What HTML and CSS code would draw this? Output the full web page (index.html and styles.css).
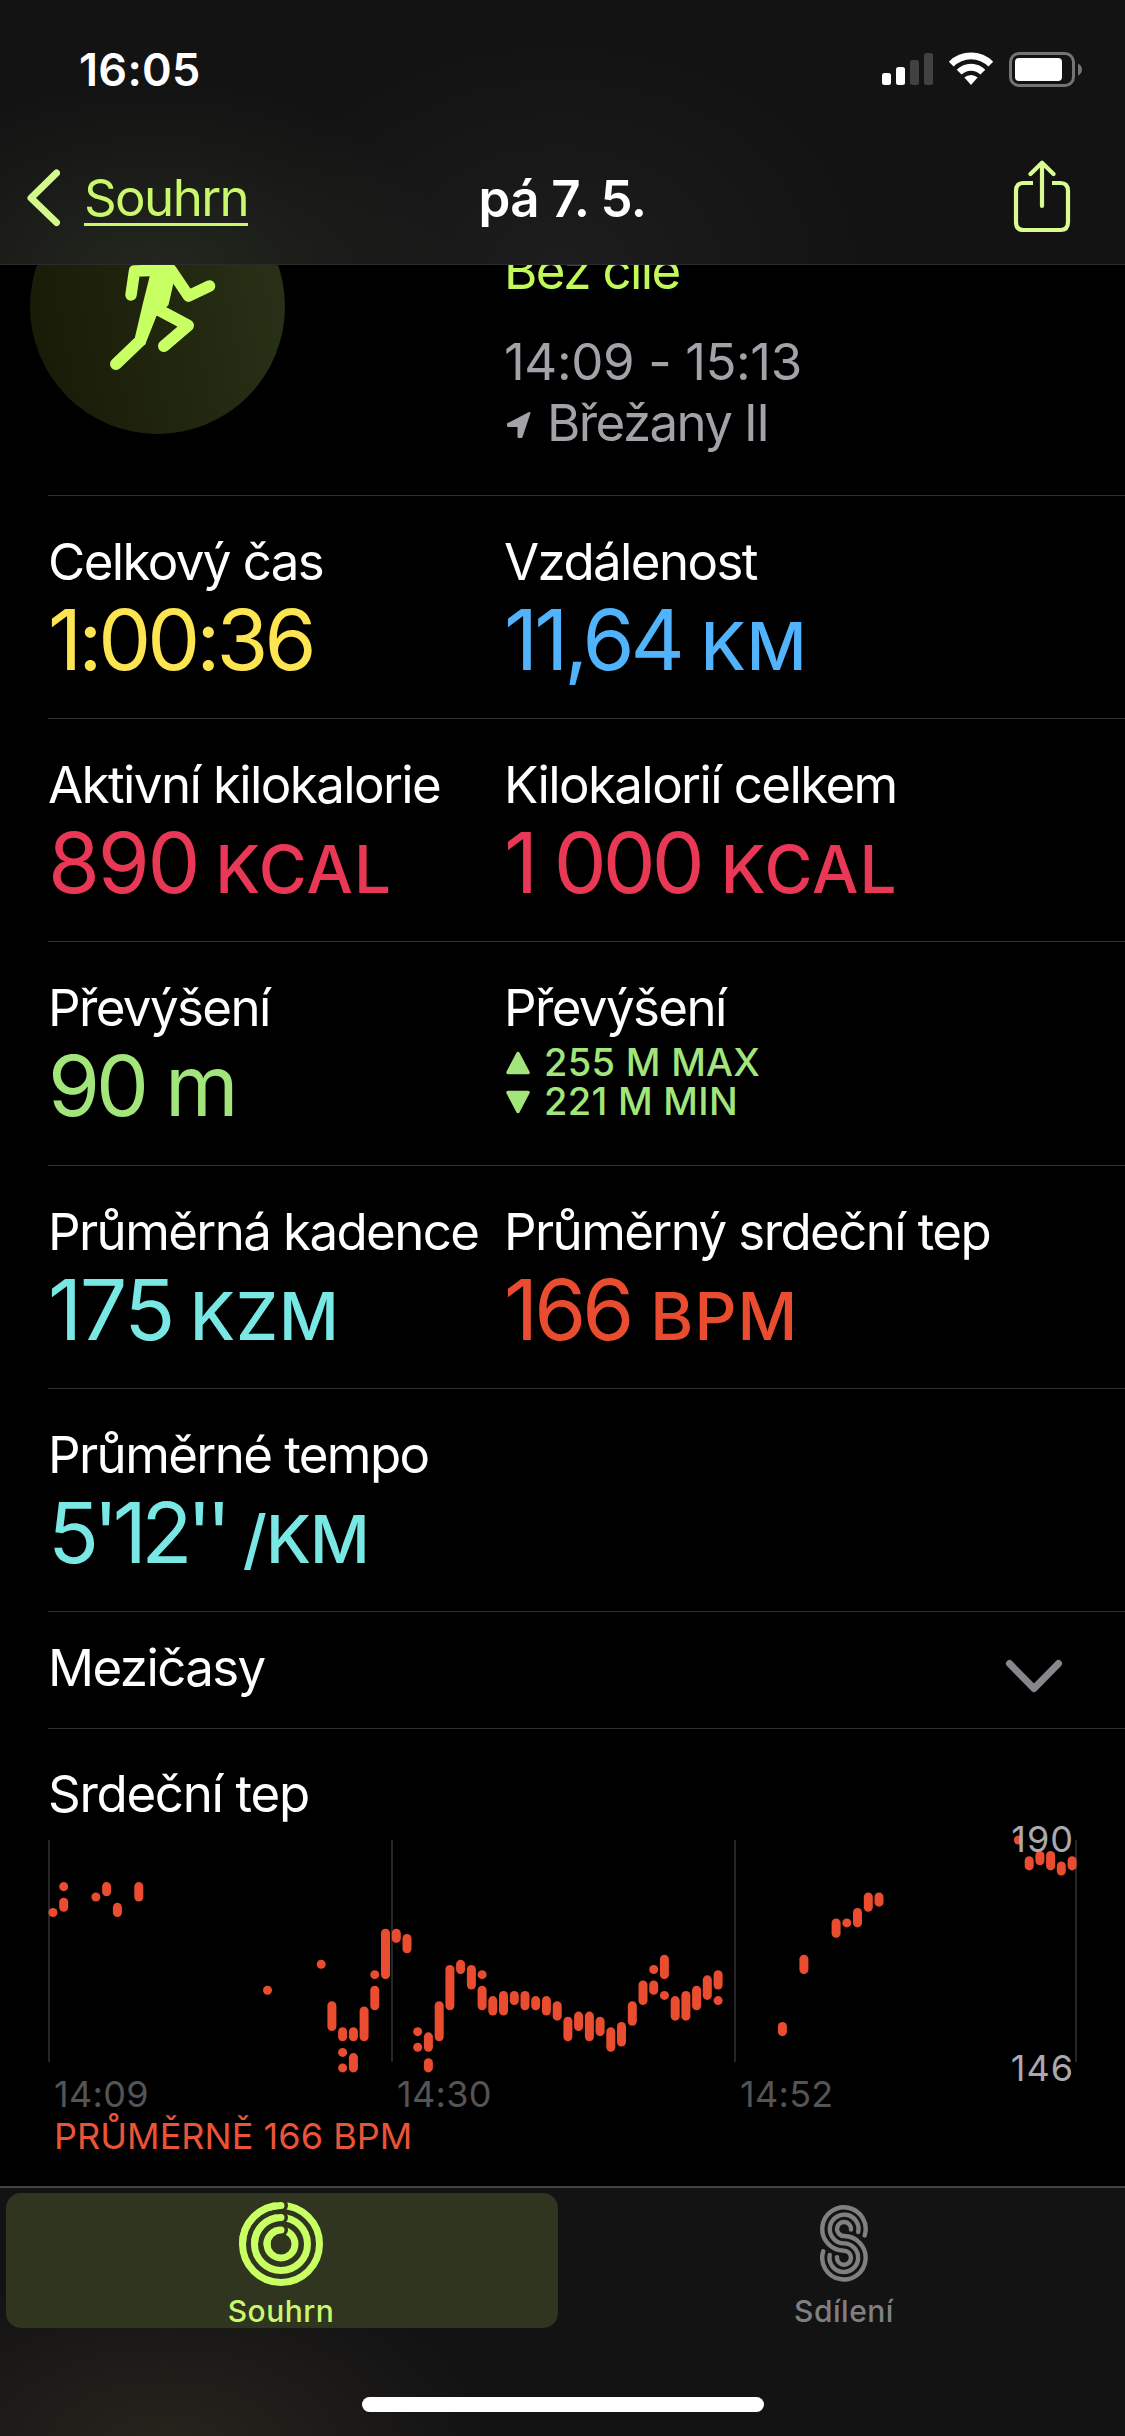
FILE: index.html
```html
<!DOCTYPE html>
<html lang="cs">
<head>
    <meta charset="UTF-8">
    <meta name="viewport" content="width=device-width, initial-scale=1.0">
    <title>pá 7. 5.</title>
    <link rel="stylesheet" href="styles.css">
</head>
<body>
    <header class="top">
        <div class="status-bar">
            <span class="time">16:05</span>
            <div class="status-icons">
                <svg width="51" height="36" viewBox="0 0 51 36">
                    <rect x="0" y="21" width="9" height="12" rx="2.5" fill="#fff"/>
                    <rect x="14" y="15" width="9" height="18" rx="2.5" fill="#fff"/>
                    <rect x="28" y="8" width="9" height="25" rx="2.5" fill="#414141"/>
                    <rect x="42" y="1" width="9" height="32" rx="2.5" fill="#414141"/>
                </svg>
                <svg width="46" height="36" viewBox="0 0 46 36">
                    <path d="M0.8 9.8 A31 31 0 0 1 45.2 9.8 L40.4 14.6 A24.5 24.5 0 0 0 5.6 14.6 Z" fill="#fff"/>
                    <path d="M8.7 17.8 A20 20 0 0 1 37.3 17.8 L32.4 22.6 A13.3 13.3 0 0 0 13.6 22.6 Z" fill="#fff"/>
                    <path d="M16.4 25.6 A9.4 9.4 0 0 1 29.6 25.6 L23 33 Z" fill="#fff"/>
                </svg>
                <svg width="73" height="36" viewBox="0 0 73 36">
                    <rect x="1.5" y="1.5" width="63" height="32" rx="8.5" fill="none" stroke="#747474" stroke-width="3"/>
                    <rect x="6" y="6" width="47" height="23" rx="4" fill="#fff"/>
                    <path d="M69 11.5 Q73 13.5 73 17.5 Q73 21.5 69 23.5 Z" fill="#747474"/>
                </svg>
            </div>
        </div>
        <nav class="nav-bar">
            <a class="back">
                <svg width="34" height="58" viewBox="0 0 34 58">
                    <path d="M30.5 4 L5 29 L30.5 53.5" fill="none" stroke="#d3f98c" stroke-width="7" stroke-linecap="round" stroke-linejoin="round"/>
                </svg>
                <span>Souhrn</span>
            </a>
            <h1>pá 7. 5.</h1>
            <svg class="share" width="58" height="74" viewBox="0 0 58 74">
                <g fill="none" stroke="#d9fb92" stroke-width="4.2">
                    <path d="M20 23 H10.5 Q3 23 3 31 V62 Q3 70 10.5 70 H47.5 Q55 70 55 62 V31 Q55 23 47.5 23 H39"/>
                    <path d="M29 46 V3 M17.5 14 L29 2.8 L40.5 14" stroke-linecap="round" stroke-linejoin="round"/>
                </g>
            </svg>
        </nav>
    </header>

    <main>
        <section class="hero">
            <svg class="badge" width="256" height="256" viewBox="0 0 256 256">
                <defs>
                    <linearGradient id="badgeFill" x1="0" y1="0.55" x2="1" y2="0.35">
                        <stop offset="0" stop-color="#191b06"/>
                        <stop offset="1" stop-color="#283117"/>
                    </linearGradient>
                </defs>
                <circle cx="127.5" cy="127.5" r="127.5" fill="url(#badgeFill)"/>
                <g fill="none" stroke="#c8ff62" stroke-linecap="round" stroke-linejoin="round">
                    <path d="M138 91 L104.5 92 L101 116" stroke-width="11.5"/>
                    <path d="M141 91 L158.5 117 L179.5 107" stroke-width="11.5"/>
                    <path d="M129 131 L158 146.500 L134 167" stroke-width="12"/>
                    <path d="M110 162 L86 185" stroke-width="12"/>
                </g>
                <path d="M122 88 L142 85 Q147 89 146 93 L138.5 126 L126.500 137 L115 166 Q106 168 105 158 L113 124 Z" fill="#c8ff62"/>
            </svg>
            <div class="hero-info">
                <div class="goal">Bez cíle</div>
                <div class="when">14:09 - 15:13</div>
                <div class="where">
                    <svg width="26" height="27" viewBox="0 0 26 27">
                        <path d="M2 12 L23.5 1 L15.5 25 L12.5 25 V14 L2 14 Z" fill="#a3a2a8" stroke="#a3a2a8" stroke-width="2" stroke-linejoin="round"/>
                    </svg>
                    <span>Břežany II</span>
                </div>
            </div>
        </section>

        <section class="metrics">
            <div class="row">
                <div class="metric yellow">
                    <div class="label">Celkový čas</div>
                    <div class="value">1:00:36</div>
                </div>
                <div class="metric blue">
                    <div class="label">Vzdálenost</div>
                    <div class="value">11,64<span class="unit">KM</span></div>
                </div>
            </div>
            <div class="row">
                <div class="metric red">
                    <div class="label">Aktivní kilokalorie</div>
                    <div class="value loose">890<span class="unit">KCAL</span></div>
                </div>
                <div class="metric red">
                    <div class="label">Kilokalorií celkem</div>
                    <div class="value">1 000<span class="unit">KCAL</span></div>
                </div>
            </div>
            <div class="row">
                <div class="metric green">
                    <div class="label">Převýšení</div>
                    <div class="value">90<span class="unit small">m</span></div>
                </div>
                <div class="metric green">
                    <div class="label">Převýšení</div>
                    <div class="elevations">
                        <div class="elevation">
                            <svg width="24" height="24" viewBox="0 0 24 24"><path d="M12 2.5 L22 21.500 H2 Z" fill="#a2e57b" stroke="#a2e57b" stroke-width="3.5" stroke-linejoin="round"/></svg>
                            <span>255 M MAX</span>
                        </div>
                        <div class="elevation">
                            <svg width="24" height="24" viewBox="0 0 24 24"><path d="M12 21.5 L22 2.5 H2 Z" fill="#a2e57b" stroke="#a2e57b" stroke-width="3.5" stroke-linejoin="round"/></svg>
                            <span>221 M MIN</span>
                        </div>
                    </div>
                </div>
            </div>
            <div class="row">
                <div class="metric cyan">
                    <div class="label">Průměrná kadence</div>
                    <div class="value loose">175<span class="unit">KZM</span></div>
                </div>
                <div class="metric orange">
                    <div class="label">Průměrný srdeční tep</div>
                    <div class="value">166<span class="unit">BPM</span></div>
                </div>
            </div>
            <div class="row">
                <div class="metric cyan">
                    <div class="label">Průměrné tempo</div>
                    <div class="value pace">5'12''<span class="unit">/KM</span></div>
                </div>
            </div>
            <div class="row splits">
                <div class="label">Mezičasy</div>
                <svg width="58" height="36" viewBox="0 0 58 36">
                    <path d="M4.5 4.5 L29 29.5 L53.5 4.5" fill="none" stroke="#87868b" stroke-width="7" stroke-linecap="round" stroke-linejoin="round"/>
                </svg>
            </div>
        </section>

        <section class="heart">
            <div class="label">Srdeční tep</div>
            <div class="chart">
                <svg id="heartChart" width="1040" height="250" viewBox="0 0 1040 250"></svg>
                <span class="max">190</span>
                <span class="min">146</span>
            </div>
            <div class="times">
                <span>14:09</span>
                <span>14:30</span>
                <span>14:52</span>
            </div>
            <div class="average">PRŮMĚRNĚ 166 BPM</div>
        </section>
    </main>

    <footer class="tab-bar">
        <div class="tabs">
            <a class="tab active">
                <svg width="86" height="86" viewBox="0 0 86 86">
                    <g fill="none" stroke="#c8ff62" stroke-width="7">
                        <circle cx="43" cy="43" r="38.5"/>
                        <circle cx="43" cy="43" r="26.5"/>
                        <circle cx="43" cy="43" r="14"/>
                    </g>
                    <!-- gap in front of each ring's head -->
                    <g fill="#2f351e">
                        <circle cx="43.5" cy="4.5" r="6.5"/>
                        <circle cx="43.5" cy="16.5" r="6.5"/>
                        <circle cx="43.5" cy="29" r="6.5"/>
                    </g>
                    <g fill="none" stroke="#c8ff62" stroke-width="7" stroke-linecap="round">
                        <path d="M4.5 43 A38.5 38.5 0 0 1 43 4.5"/>
                        <path d="M16.5 43 A26.5 26.5 0 0 1 43 16.5"/>
                        <path d="M29 43 A14 14 0 0 1 43 29"/>
                    </g>
                </svg>
                <span>Souhrn</span>
            </a>
            <a class="tab">
                <svg width="48" height="86" viewBox="0 -4 48 86">
                    <g fill="none" stroke="#808080" stroke-width="4.4" stroke-linecap="round">
                        <path d="M44.7 30.4 A21.7 21.7 0 1 0 24 45.7 A7 7 0 1 1 17 52.2"/>
                        <path d="M38.2 27 A14.35 14.35 0 1 0 24 38.35 A14.35 14.35 0 1 1 9.7 50"/>
                        <path d="M31 24.5 A7 7 0 1 0 24 31 A21.7 21.7 0 1 1 3.2 46.3"/>
                    </g>
                </svg>
                <span>Sdílení</span>
            </a>
        </div>
        <div class="home-indicator"></div>
    </footer>

    <script>
        // [slot, highest bpm, lowest bpm]
        const samples = [
            [0, 176, 176], [1, 181, 181], [1, 178, 177], [4, 179, 179], [5, 181, 180], [6, 177, 176],
            [8, 181, 179], [20, 161, 161], [25, 166, 166], [26, 158, 154], [27, 153, 152], [27, 149, 149],
            [27, 146, 146], [28, 153, 152], [28, 148, 146], [29, 157, 152], [30, 164, 164], [30, 161, 158],
            [31, 172, 164], [32, 172, 171], [33, 171, 169], [34, 153, 153], [34, 150, 150], [35, 152, 150],
            [35, 147, 146], [36, 158, 152], [37, 165, 158], [38, 166, 165], [39, 165, 162], [40, 164, 164],
            [40, 161, 158], [41, 159, 157], [42, 160, 157], [43, 160, 159], [44, 160, 158], [45, 159, 158],
            [46, 159, 157], [47, 158, 156], [48, 155, 152], [49, 156, 154], [50, 156, 152], [51, 155, 153],
            [52, 153, 150], [53, 154, 151], [54, 158, 155], [55, 162, 159], [56, 165, 165], [56, 162, 161],
            [57, 167, 164], [57, 160, 160], [58, 159, 156], [59, 160, 156], [60, 161, 158], [61, 163, 160],
            [62, 164, 162], [62, 159, 159], [68, 154, 153], [70, 167, 165], [73, 174, 172], [74, 174, 174],
            [75, 176, 174], [76, 179, 177], [77, 179, 178], [90, 190, 190], [91, 186, 185], [92, 187, 186],
            [93, 187, 185], [94, 185, 184], [95, 186, 185]
        ];

        const chart = document.getElementById("heartChart");
        const y = bpm => 9 + (190 - bpm) * 5.18;

        function drawLine(className, x, y1, y2) {
            const line = document.createElementNS("http://www.w3.org/2000/svg", "line");
            line.setAttribute("class", className);
            line.setAttribute("x1", x);
            line.setAttribute("x2", x);
            line.setAttribute("y1", y1);
            line.setAttribute("y2", y2);
            chart.appendChild(line);
        }

        [1, 344, 687, 1028].forEach(x => drawLine("grid-line", x, 9, 231));
        samples.forEach(([slot, high, low]) => {
            drawLine("beat", (5 + slot * 10.727).toFixed(1), y(high), y(low) + 0.01);
        });
    </script>
</body>
</html>
```
FILE: styles.css
```css
body {
    margin: 0;
    background: #000;
    color: #fff;
    font-family: 'Inter', 'Liberation Sans', sans-serif;
    font-size: 51px;
    line-height: 61px;
    letter-spacing: -1.6px;
}
svg {
    display: block;
    flex: none;
}

/* Header */
.top {
    position: fixed;
    top: 0;
    left: 0;
    right: 0;
    box-sizing: border-box;
    height: 265px;
    background:
        radial-gradient(ellipse 300px 190px at 155px 275px, #24271f, rgba(36, 39, 31, 0)),
        radial-gradient(ellipse 300px 220px at 560px 265px, #1d1d1d, rgba(29, 29, 29, 0)),
        #131313;
    border-bottom: 1px solid #2b2b2b;
    z-index: 1;
}
.status-bar {
    display: flex;
    justify-content: space-between;
    height: 132px;
    padding: 0 43px 0 79px;
}
.time {
    margin-top: 39px;
    font-size: 45px;
    font-weight: 600;
    letter-spacing: 0.3px;
}
.status-icons {
    display: flex;
    gap: 15px;
    margin-top: 52px;
}
.nav-bar {
    display: grid;
    grid-template-columns: 1fr auto 1fr;
    align-items: start;
    padding: 0 54px 0 26px;
}
.back {
    display: flex;
    margin-top: 37px;
    color: #caf86b;
}
.back span {
    margin-left: 24px;
    height: 56px;
    margin-top: -2px;
    line-height: 61px;
    border-bottom: 3px solid #caf86b;
}
h1 {
    margin: 36px 0 0;
    padding-left: 28px;
    font-size: 51px;
    font-weight: 600;
    letter-spacing: -0.6px;
}
.share {
    justify-self: end;
    margin-top: 28px;
}

/* Workout header */
.hero {
    display: grid;
    grid-template-columns: 474px 1fr;
    height: 316px;
    padding: 179px 0 0 30px;
}
.hero-info {
    padding-top: 61px;
    color: #a3a2a8;
}
.goal {
    margin-bottom: 30px;
    color: #c1f95a;
}
.when {
    letter-spacing: -0.4px;
}
.where {
    display: flex;
    align-items: center;
    gap: 15px;
    padding-left: 2px;
}
.where svg {
    margin-top: 6px;
}

/* Metrics */
.metrics {
    margin-left: 48px;
}
.row {
    display: grid;
    grid-template-columns: 456px 1fr;
    box-sizing: border-box;
    height: 223.2px;
    padding-top: 35px;
    border-top: 1px solid #303033;
}
.value {
    display: flex;
    align-items: baseline;
    margin-top: 8px;
    font-size: 84px;
    line-height: 80px;
    letter-spacing: -4px;
}
.loose {
    letter-spacing: -2.3px;
}
.loose .unit {
    margin-left: 17px;
}
.pace {
    letter-spacing: -5.7px;
}
.pace .unit {
    margin-left: 17px;
    letter-spacing: -1px;
}
.unit {
    margin-left: 20px;
    font-size: 65.5px;
    font-weight: 500;
    letter-spacing: 1px;
}
.small {
    font-size: 84px;
    font-weight: 400;
}
.yellow .value { color: #fde552; }
.blue .value { color: #51b3fb; }
.red .value { color: #e83856; }
.green .value { color: #a2e57b; }
.cyan .value { color: #79e8e4; }
.orange .value { color: #ea4c2f; }
.elevations {
    padding-top: 5px;
}
.elevation {
    display: flex;
    align-items: center;
    gap: 14px;
    padding-left: 2px;
    color: #a2e57b;
    font-size: 38px;
    font-weight: 500;
    line-height: 39px;
    letter-spacing: 0.3px;
}
.splits {
    display: flex;
    justify-content: space-between;
    height: 117px;
    padding: 25px 62px 0 0;
}
.splits svg {
    margin-top: 22px;
}

/* Heart rate */
.heart {
    margin-left: 48px;
    padding-top: 34px;
    border-top: 1px solid #303033;
}
.heart .label {
    margin-bottom: 7px;
    letter-spacing: -1.3px;
}
.chart {
    position: relative;
    height: 245px;
}
.grid-line {
    stroke: #262626;
    stroke-width: 2;
}
.beat {
    stroke: #ea4c2f;
    stroke-width: 9;
    stroke-linecap: round;
}
.max, .min {
    position: absolute;
    right: 51px;
    color: #a9a9af;
    font-size: 36px;
    line-height: 36px;
    letter-spacing: 1px;
}
.max { top: -10px; }
.min { top: 219px; }
.times {
    display: grid;
    grid-template-columns: 343px 343px 1fr;
    padding-left: 6px;
    color: #545454;
    font-size: 36px;
    line-height: 36px;
    letter-spacing: 0.3px;
}
.average {
    padding-left: 6px;
    color: #ea5437;
    font-size: 36px;
    line-height: 48px;
    letter-spacing: 0.05px;
}

/* Tab bar */
.tab-bar {
    position: fixed;
    left: 0;
    right: 0;
    bottom: 0;
    box-sizing: border-box;
    height: 250px;
    padding: 5px 6px 0;
    background:
        radial-gradient(ellipse 320px 190px at 165px 265px, #28241d, rgba(40, 36, 29, 0)),
        #131314;
    border-top: 2px solid #444446;
}
.tabs {
    display: grid;
    grid-template-columns: 552px 552px;
    gap: 10px;
}
.tab {
    display: flex;
    flex-direction: column;
    align-items: center;
    height: 135px;
    padding-top: 8px;
    box-sizing: border-box;
    border-radius: 15px;
    color: #808080;
    font-size: 30px;
    font-weight: 500;
    line-height: 36px;
    letter-spacing: 0.5px;
}
.tab span {
    margin-top: 6px;
}
.active {
    background: #2f351e;
    color: #c8f86c;
}
.active svg,
.active span {
    margin-right: 2px;
}
.home-indicator {
    width: 402px;
    height: 15px;
    margin: 69px auto 0;
    border-radius: 8px;
    background: #fff;
}
```
